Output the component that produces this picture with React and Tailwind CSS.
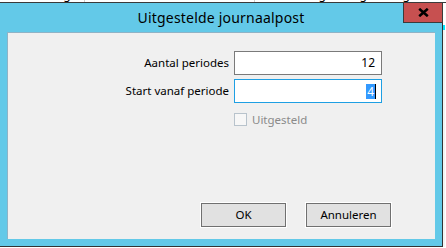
import React from 'react'

const font = { fontFamily: '"Noto Sans", "Open Sans", Arial, sans-serif' }

// Strip of the grid behind the dialog; only the bottom of its text peeks out
const BackgroundGrid = () => (
  <div className="h-[3px] overflow-hidden bg-white border-b border-[#3a3a3a]">
    <div className="flex -mt-[12px] text-[12px] leading-[14px] text-black whitespace-nowrap">
      <span className="w-[22px] -ml-[8px]">aal</span>
      <span className="w-[70px] pl-[4px]">Rekening</span>
      <span className="w-[4px] border-l border-[#d0d0d0]" />
      <span className="w-[166px] pl-[8px]">Omschr</span>
      <span className="w-[4px] border-l border-[#d0d0d0]" />
      <span className="w-[68px] text-right">Bedrag</span>
      <span className="w-[40px] text-right">Bedrag</span>
      <span className="w-[44px] text-right">Bedrag</span>
    </div>
  </div>
)

const TextBox = ({ value, focused, selected }) => (
  <div
    className={`h-[24px] w-[148px] bg-white border flex items-center justify-end pr-[5px] text-[12px] text-black ${
      focused ? 'border-[#1e9fe3]' : 'border-[#7a7a7a]'
    }`}
  >
    {selected ? (
      <span className="flex items-center">
        <span className="bg-[#3399ff] text-white px-[1px] leading-[15px]">{value}</span>
        <span className="w-[1px] h-[15px] bg-black" />
      </span>
    ) : (
      <span className="pr-[1px]">{value}</span>
    )}
  </div>
)

const Button = ({ children }) => (
  <button className="h-[24px] w-[85px] bg-[#e1e1e1] border border-[#707070] outline outline-1 outline-white text-[11.5px] text-black">
    {children}
  </button>
)

export default function App() {
  return (
    <div className="w-[446px] h-[248px] overflow-hidden bg-white" style={font}>
      <BackgroundGrid />
      <div className="flex">
        <div className="w-[443px] h-[244px] bg-[#63c9e8] border-r border-b border-[#333] flex flex-col">
          {/* Title bar */}
          <div className="relative h-[29px] flex items-center justify-center">
            <span className="text-[14px] text-black tracking-[0.2px] -mt-[1px]">Uitgestelde journaalpost</span>
            <div className="absolute right-[-1px] top-[-1px] w-[40px] h-[21px] bg-[#c75050] border border-[#3b3b3b] flex items-center justify-center">
              <svg width="11" height="9" viewBox="0 0 11 9">
                <path d="M1.2 0.8 L9.8 8.2 M9.8 0.8 L1.2 8.2" stroke="#000" strokeWidth="2.6" />
              </svg>
            </div>
          </div>

          {/* Client area */}
          <div className="ml-[7px] mr-[7px] h-[207px] bg-[#f0f0f0] border-t border-l border-[#8fb3c6] flex flex-col">
            <div className="grid grid-cols-[221px_148px] gap-x-[5px] gap-y-[4px] pt-[18px] items-center text-[11.5px] text-black">
              <span className="text-right">Aantal periodes</span>
              <TextBox value="12" />
              <span className="text-right">Start vanaf periode</span>
              <TextBox value="4" focused selected />
              <span />
              <label className="flex items-center gap-[5px] mt-[4px] text-[#8a8a8a]">
                <span className="w-[13px] h-[13px] border border-[#b8c3cc] bg-[#f7f7f7]" />
                Uitgesteld
              </label>
            </div>

            <div className="mt-auto mb-[12px] flex justify-end gap-[20px] pr-[44px]">
              <Button>OK</Button>
              <Button>Annuleren</Button>
            </div>
          </div>
        </div>
        <div className="w-[2px] flex flex-col">
          <div className="h-[22px] bg-white" />
          <div className="h-[5px] bg-[#00e5ff]" />
          <div className="flex-1 bg-[#f4f4f4]" />
        </div>
      </div>
    </div>
  )
}
